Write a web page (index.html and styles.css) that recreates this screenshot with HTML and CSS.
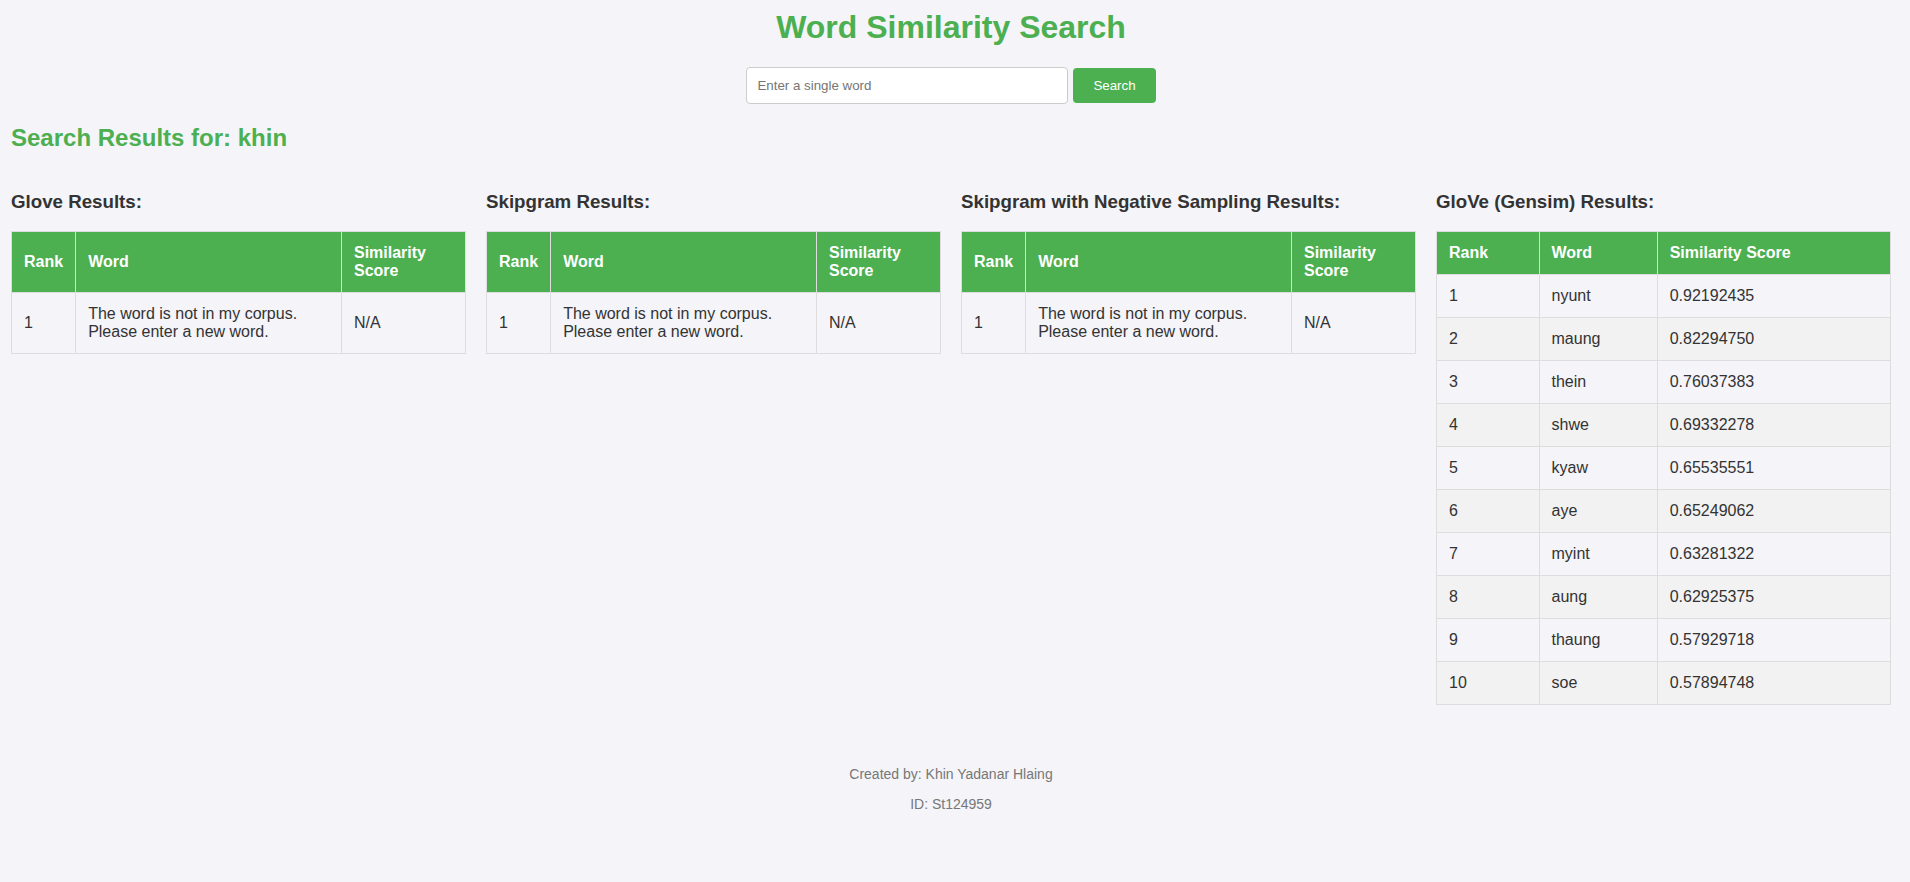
FILE: index.html
```html
<!DOCTYPE html>
<html lang="en">
<head>
<meta charset="utf-8">
<title>Word Similarity Search</title>
<link rel="stylesheet" href="styles.css">
</head>
<body>
<div class="page">
  <h1 class="title">Word Similarity Search</h1>
  <form class="search-form">
    <input class="search-input" type="text" placeholder="Enter a single word">
    <button class="search-btn" type="button">Search</button>
  </form>

  <h2 class="results-heading">Search Results for: khin</h2>

  <div class="results-grid">
    <section class="model">
      <h3 class="model-title">Glove Results:</h3>
      <table class="result-table">
        <thead><tr><th>Rank</th><th>Word</th><th>Similarity Score</th></tr></thead>
        <tbody><tr><td>1</td><td>The word is not in my corpus. Please enter a new word.</td><td>N/A</td></tr></tbody>
      </table>
    </section>
    <section class="model">
      <h3 class="model-title">Skipgram Results:</h3>
      <table class="result-table">
        <thead><tr><th>Rank</th><th>Word</th><th>Similarity Score</th></tr></thead>
        <tbody><tr><td>1</td><td>The word is not in my corpus. Please enter a new word.</td><td>N/A</td></tr></tbody>
      </table>
    </section>
    <section class="model">
      <h3 class="model-title">Skipgram with Negative Sampling Results:</h3>
      <table class="result-table">
        <thead><tr><th>Rank</th><th>Word</th><th>Similarity Score</th></tr></thead>
        <tbody><tr><td>1</td><td>The word is not in my corpus. Please enter a new word.</td><td>N/A</td></tr></tbody>
      </table>
    </section>
    <section class="model">
      <h3 class="model-title">GloVe (Gensim) Results:</h3>
      <table class="result-table">
        <thead><tr><th>Rank</th><th>Word</th><th>Similarity Score</th></tr></thead>
        <tbody>
          <tr><td>1</td><td>nyunt</td><td>0.92192435</td></tr>
          <tr><td>2</td><td>maung</td><td>0.82294750</td></tr>
          <tr><td>3</td><td>thein</td><td>0.76037383</td></tr>
          <tr><td>4</td><td>shwe</td><td>0.69332278</td></tr>
          <tr><td>5</td><td>kyaw</td><td>0.65535551</td></tr>
          <tr><td>6</td><td>aye</td><td>0.65249062</td></tr>
          <tr><td>7</td><td>myint</td><td>0.63281322</td></tr>
          <tr><td>8</td><td>aung</td><td>0.62925375</td></tr>
          <tr><td>9</td><td>thaung</td><td>0.57929718</td></tr>
          <tr><td>10</td><td>soe</td><td>0.57894748</td></tr>
        </tbody>
      </table>
    </section>
  </div>

  <footer class="footer">
    <p>Created by: Khin Yadanar Hlaing</p>
    <p>ID: St124959</p>
  </footer>
</div>
</body>
</html>
```

FILE: styles.css
```css
html, body {
  margin: 0;
  padding: 0;
  background: #f4f4f9;
}

body {
  font-family: "Liberation Sans", Arial, sans-serif;
  color: #333;
  font-size: 16px;
}

.page {
  padding: 9px 19px 0 11px;
}

.title {
  margin: 0 0 21px;
  text-align: center;
  color: #4caf50;
  font-size: 32px;
  font-weight: bold;
}

.search-form {
  display: flex;
  justify-content: center;
  align-items: center;
  gap: 5px;
  margin: 0;
}

.search-input {
  box-sizing: border-box;
  width: 322px;
  height: 37px;
  padding: 10px;
  border: 1px solid #ccc;
  border-radius: 4px;
  font-family: "Liberation Sans", Arial, sans-serif;
  font-size: 13.33px;
  background: #fff;
  color: #333;
  outline: none;
}

.search-input::placeholder {
  color: #757575;
}

.search-btn {
  box-sizing: border-box;
  height: 35px;
  padding: 0 20px;
  border: none;
  border-radius: 4px;
  background: #4caf50;
  color: #fff;
  font-family: "Liberation Sans", Arial, sans-serif;
  font-size: 13.33px;
  cursor: pointer;
}

.results-heading {
  margin: 20px 0 0;
  color: #4caf50;
  font-size: 24px;
  font-weight: bold;
}

.results-grid {
  display: grid;
  grid-template-columns: repeat(4, 1fr);
  gap: 20px;
  align-items: start;
  margin-top: 20px;
}

.model {
  min-width: 0;
}

.model-title {
  margin: 19px 0 18px;
  font-size: 18.72px;
  font-weight: bold;
  color: #333;
}

.result-table {
  width: 100%;
  border-collapse: collapse;
}

.result-table th,
.result-table td {
  border: 1px solid #ddd;
  padding: 12px;
  text-align: left;
  color: #333;
}

.result-table th {
  background: #4caf50;
  color: #fff;
  font-weight: bold;
}

.result-table tbody tr:nth-child(even) {
  background: #f2f2f2;
}

.footer {
  margin-top: 61px;
  text-align: center;
  color: #777;
  font-size: 14px;
}

.footer p {
  margin: 14px 0;
}
```
